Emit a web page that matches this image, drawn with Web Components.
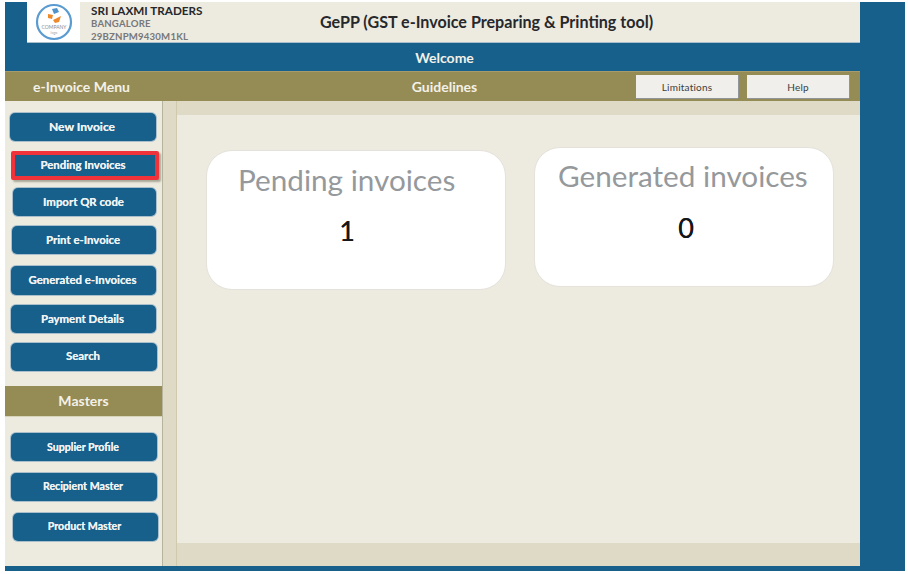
<!DOCTYPE html>
<html lang="en"><head><meta charset="utf-8"><title>GePP</title>
<style>
html,body{margin:0;padding:0;background:#fff;font-family:Lato,"Open Sans",sans-serif}
</style></head><body>
<gepp-app>
  <gepp-header slot="header"></gepp-header>
  <gepp-menubar slot="menubar"></gepp-menubar>
  <gepp-sidebar slot="sidebar">
    <gepp-button big style="margin:12px 6px 0 5px">New Invoice</gepp-button>
    <gepp-button marked style="margin:10px 3px 0 6px">Pending Invoices</gepp-button>
    <gepp-button style="margin:8px 6px 0 8px">Import QR code</gepp-button>
    <gepp-button style="margin:10px 6px 0 7px">Print e-Invoice</gepp-button>
    <gepp-button style="margin:12px 6px 0 6px;height:29px">Generated e-Invoices</gepp-button>
    <gepp-button style="margin:10px 6px 0 6px">Payment Details</gepp-button>
    <gepp-button style="margin:10px 5px 0 6px;padding-bottom:3px">Search</gepp-button>
    <gepp-band>Masters</gepp-band>
    <gepp-button tiny style="margin:16px 5px 0 6px;padding-bottom:0">Supplier Profile</gepp-button>
    <gepp-button tiny style="margin:12px 5px 0 6px">Recipient Master</gepp-button>
    <gepp-button tiny style="margin:12px 4px 0 8px">Product Master</gepp-button>
  </gepp-sidebar>
  <gepp-main slot="main">
    <gepp-card style="margin:35px 0 0 29px;--lt:11px;--vt:17px" indent="31" label="Pending invoices" value="1" valuex="-18"></gepp-card>
    <gepp-card style="margin:32px 0 0 28px;--lt:10px;--vt:18px" indent="23" label="Generated invoices" value="0" valuex="4"></gepp-card>
  </gepp-main>
</gepp-app>
<script>
function def(name, css, html){
  customElements.define(name, class extends HTMLElement{
    constructor(){super();const r=this.attachShadow({mode:'open'});
      r.innerHTML='<style>'+css+'</style>'+(typeof html==='function'?html(this):html);}
  });
}
def('gepp-app',`
:host{display:block;box-sizing:border-box;width:900px;height:569px;margin:2px 0 0 5px;background:#17608c}
.wrap{display:grid;grid-template-columns:855px;grid-template-rows:41px 28px 30px 465px;height:100%}
.welcome{margin:0;color:#f3f1e8;font:700 14px Lato,sans-serif;text-align:center;line-height:29px;padding-left:24px}
.body{display:grid;grid-template-columns:158px 697px}
`,`<div class="wrap"><div><slot name="header"></slot></div>
<p class="welcome">Welcome</p>
<div><slot name="menubar"></slot></div>
<div class="body"><slot name="sidebar"></slot><slot name="main"></slot></div></div>`);

def('gepp-header',`
:host{display:flex;align-items:stretch;height:41px;margin-left:22px;background:#edeae0;border-bottom:1px solid #a9c0cc;box-sizing:border-box}
.logo{width:53px;background:#fff;display:flex;align-items:center;justify-content:center;flex:none}
.co{width:115px;flex:none;padding-left:11px;font-family:Lato,sans-serif;line-height:13px;margin-top:1px}
.co b{display:block;font-size:11.7px;line-height:14px;color:#26282b}
.co span{display:block;font-size:9.6px;color:#77787a;font-weight:700;letter-spacing:.2px}
h1{margin:0;font:700 16.1px Lato,sans-serif;color:#26282b;align-self:center;padding:0 0 2px 114px;white-space:nowrap}
`,`<div class="logo"><svg width="40" height="40" viewBox="0 0 40 40"><circle cx="20" cy="20" r="17" fill="#fff" stroke="#5a9bd1" stroke-width="2.2"/><path d="M18 7l5-1 2 4-5 2z" fill="#4f93cb"/><path d="M14 12l5 1-1 4-4-1z" fill="#ee8a2c"/><path d="M19 18l8-4-2 6-4 1z" fill="#ee8a2c"/><text x="20" y="27" text-anchor="middle" font-size="5" fill="#8a8d90" font-family="Lato,sans-serif">COMPANY</text><text x="20" y="32" text-anchor="middle" font-size="3.6" fill="#a0a3a6" font-family="Lato,sans-serif">logo</text></svg></div>
<div class="co"><b>SRI LAXMI TRADERS</b><span>BANGALORE</span><span>29BZNPM9430M1KL</span></div>
<h1>GePP (GST e-Invoice Preparing &amp; Printing tool)</h1>`);

def('gepp-menubar',`
:host{display:flex;align-items:center;height:30px;background:#958b54;border-top:1px solid #a59b6c;box-sizing:border-box;color:#f3f1e8;font:700 14px Lato,sans-serif}
.a{width:153px;text-align:center;flex:none}
.b{width:383px;margin-left:95px;text-align:center;flex:none}
button{box-sizing:border-box;height:23px;width:102px;flex:none;background:#f0efeb;border:0;box-shadow:0 1px 0 #8f9598,1px 0 0 #8f9598;color:#3a3d40;font:400 10px Lato,sans-serif;letter-spacing:.2px;padding:0}
.d{margin-left:9px}
`,`<span class="a">e-Invoice Menu</span><span class="b">Guidelines</span><button class="c">Limitations</button><button class="d">Help</button>`);

def('gepp-sidebar',`
:host{display:flex;flex-direction:column;box-sizing:border-box;height:465px;background:#edeae0;border-right:1px solid #b6b49d}
`,`<slot></slot>`);

def('gepp-band',`
:host{display:block;height:30px;margin-top:15px;background:#958b54;color:#f3f1e8;font:700 14px/30px Lato,sans-serif;text-align:center;border-bottom:1px solid #d8d3bb}
`,`<slot></slot>`);

def('gepp-button',`
:host{display:flex;align-items:center;justify-content:center;box-sizing:border-box;height:28px;padding:0 2px 2px 0;background:#17608c;border-radius:5px;color:#eef3f4;font:700 11.4px Lato,sans-serif;text-shadow:0 0 .6px #eef3f4;box-shadow:0 0 0 1px #a9c0cc;flex:none;text-align:center}
:host([big]){font-size:12px}
:host([tiny]){font-size:10.6px}
:host([marked]){border:4px solid #f0333a;border-radius:2px;height:29px;padding:0 4px 2px 0;box-shadow:2px 2px 2px #a9a797}
`,`<slot></slot>`);

def('gepp-main',`
:host{display:grid;grid-template-columns:14px 1fr;grid-template-rows:14px 1fr 23px;box-sizing:border-box;height:465px;background:#edeae0}
.rail{grid-row:1/4;background:#dfdac6;border-right:1px solid #cfc9ae;box-sizing:border-box}
.top,.bottom{background:#dfdac6}
.mid{display:flex;align-items:flex-start;min-width:0}
`,`<div class="rail"></div><div class="top"></div><div class="mid"><slot></slot></div><div class="bottom"></div>`);

def('gepp-card',`
:host{display:block;box-sizing:border-box;width:300px;height:140px;background:#fff;border-radius:26px;border:1px solid #e4e2da;flex:none;font-family:Lato,sans-serif}
.l{font-size:29.7px;line-height:36px;color:#95999c;white-space:nowrap;margin-top:var(--lt)}
.v{font-size:27px;line-height:32px;color:#15171a;text-align:center;margin-top:var(--vt);text-shadow:0 0 .6px #15171a}
`,el=>`<div class="l" style="padding-left:${el.getAttribute('indent')}px">${el.getAttribute('label')}</div><div class="v" style="margin-left:${el.getAttribute('valuex')}px">${el.getAttribute('value')}</div>`);
</script>
</body></html>
